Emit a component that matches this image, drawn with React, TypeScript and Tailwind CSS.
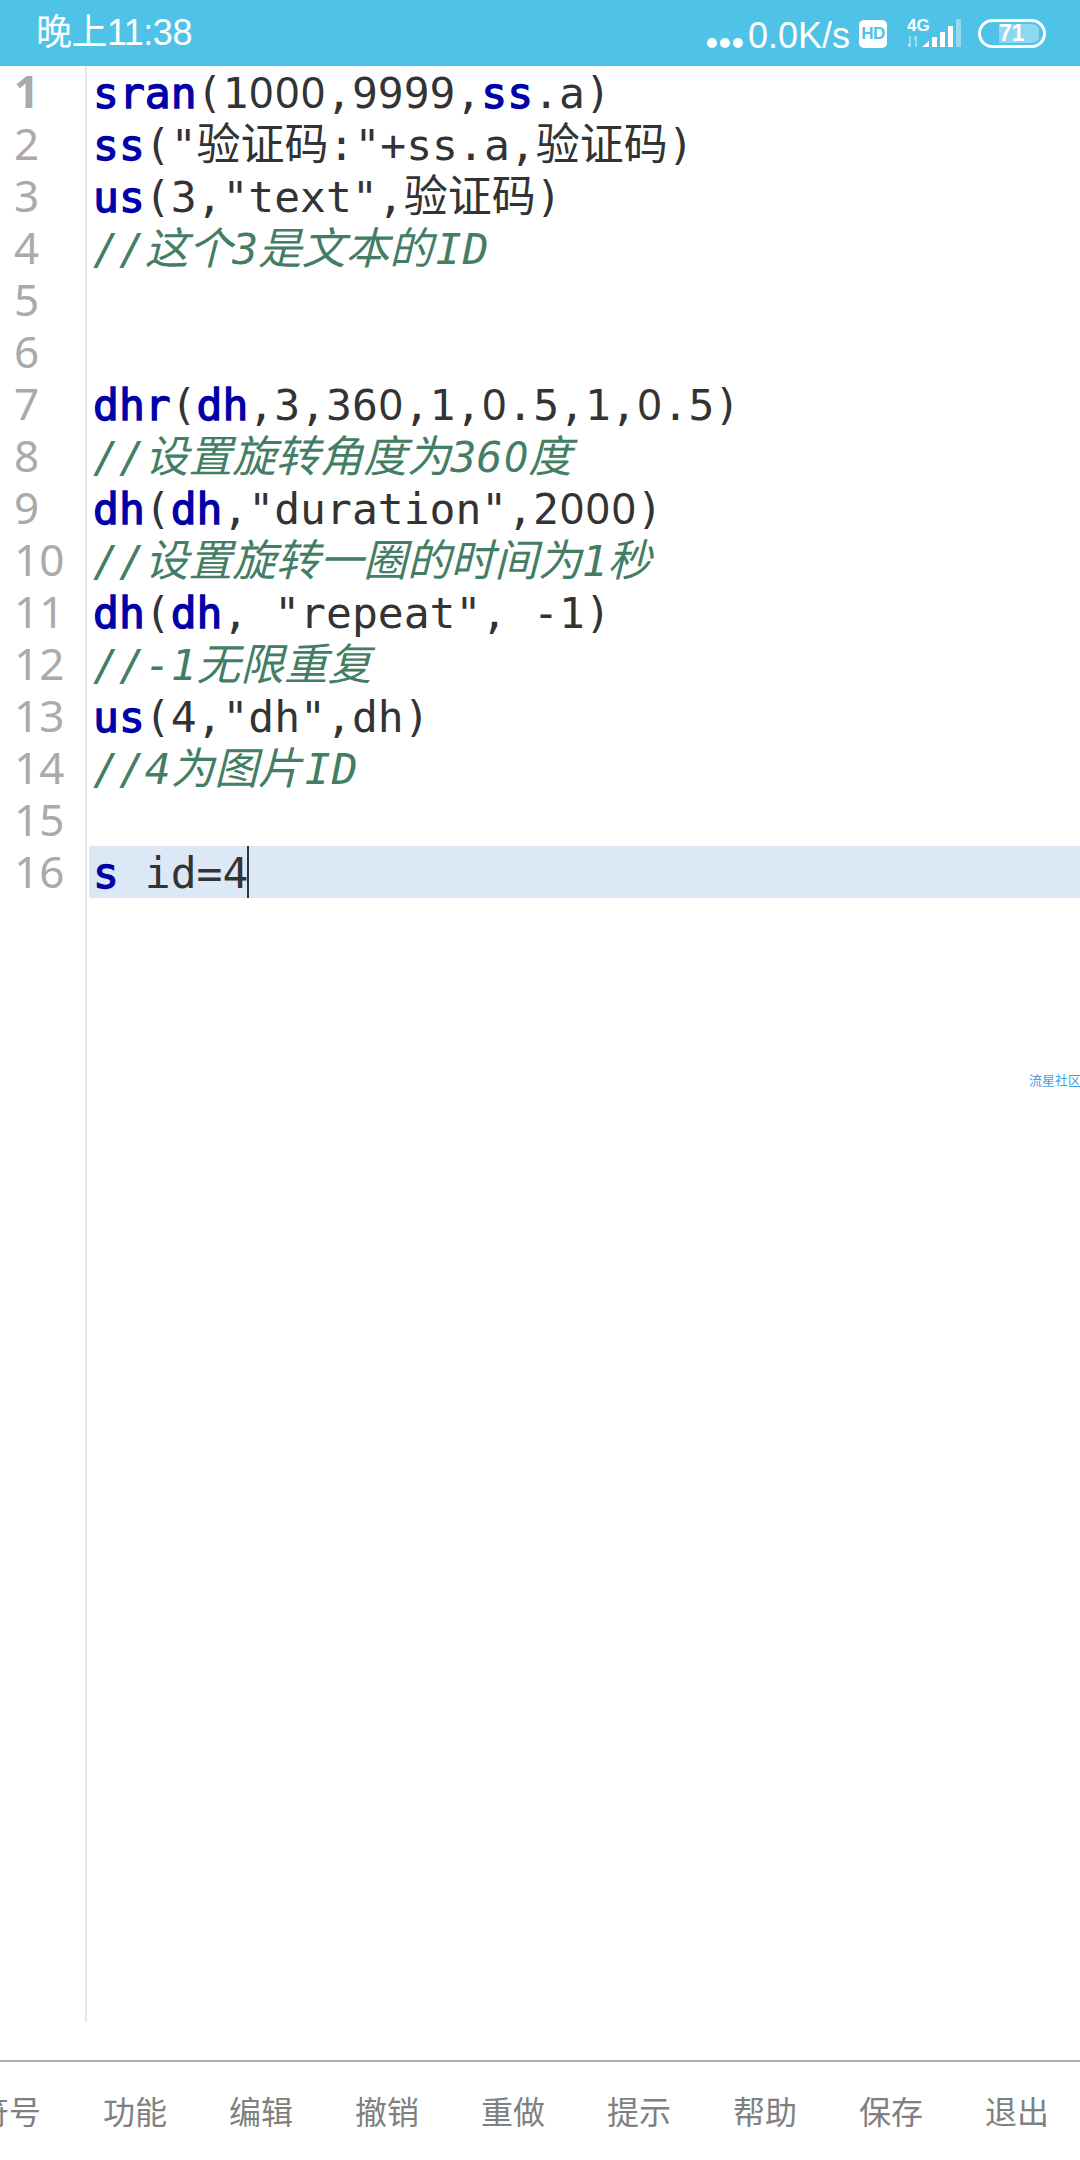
const MONO = "font-['DejaVu_Sans_Mono','Noto_Sans_CJK_SC',monospace]";

type Seg = { t: string; k?: "kw" | "cm" };
const lines: Seg[][] = [
  [{ t: "sran", k: "kw" }, { t: "(1000,9999," }, { t: "ss", k: "kw" }, { t: ".a)" }],
  [{ t: "ss", k: "kw" }, { t: '("验证码:"+ss.a,验证码)' }],
  [{ t: "us", k: "kw" }, { t: '(3,"text",验证码)' }],
  [{ t: "//这个3是文本的ID", k: "cm" }],
  [],
  [],
  [{ t: "dhr", k: "kw" }, { t: "(" }, { t: "dh", k: "kw" }, { t: ",3,360,1,0.5,1,0.5)" }],
  [{ t: "//设置旋转角度为360度", k: "cm" }],
  [{ t: "dh", k: "kw" }, { t: "(" }, { t: "dh", k: "kw" }, { t: ',"duration",2000)' }],
  [{ t: "//设置旋转一圈的时间为1秒", k: "cm" }],
  [{ t: "dh", k: "kw" }, { t: "(" }, { t: "dh", k: "kw" }, { t: ', "repeat", -1)' }],
  [{ t: "//-1无限重复", k: "cm" }],
  [{ t: "us", k: "kw" }, { t: '(4,"dh",dh)' }],
  [{ t: "//4为图片ID", k: "cm" }],
  [],
  [{ t: "s", k: "kw" }, { t: " id=4" }],
];

const menu = ["符号", "功能", "编辑", "撤销", "重做", "提示", "帮助", "保存", "退出"];

function Runs({ text, comment }: { text: string; comment?: boolean }) {
  const parts = text.split(/([\u4e00-\u9fff]+|0|ID)/).filter(Boolean);
  return (
    <>
      {parts.map((p, i) =>
        p === "0" ? (
          <span key={i} className="inline-block w-[25.9px] text-center font-['Noto_Sans',sans-serif] text-[43px] leading-[39.4px]">0</span>
        ) : p === "ID" ? (
          <span key={i} className="pl-[3px] tracking-[1px]">{p}</span>
        ) : /[\u4e00-\u9fff]/.test(p) ? (
          <span key={i} className={comment ? "text-[43.7px] leading-[42px]" : "text-[44px] leading-[42px]"}>{p}</span>
        ) : (
          <span key={i}>{p}</span>
        ),
      )}
    </>
  );
}

function Signal() {
  return (
    <svg width="56" height="30" viewBox="0 0 56 30" className="shrink-0">
      <text x="0" y="13" fontSize="17" fontWeight="700" fill="#fff" fontFamily="Liberation Sans">4G</text>
      <path d="M3 18v11M1 26l2 3M9 29V18M7 21l2-3" stroke="#fff" strokeOpacity="0.55" strokeWidth="1.5" fill="none" />
      <path d="M15 29l7-6v6z" fill="#fff" />
      <rect x="25" y="19" width="5" height="10" fill="#fff" />
      <rect x="33" y="14" width="5" height="15" fill="#fff" />
      <rect x="41" y="8" width="5" height="21" fill="#fff" />
      <rect x="49" y="1" width="5" height="28" fill="#fff" fillOpacity="0.4" />
    </svg>
  );
}

export default function App() {
  return (
    <div className="relative flex h-[2160px] w-[1080px] flex-col overflow-hidden bg-white">
      <div className="flex h-[66px] shrink-0 items-center justify-between bg-[#4fc3e7] pl-[36px] pr-[34px] text-white">
        <span className="font-['Liberation_Sans','Noto_Sans_CJK_SC',sans-serif] text-[36px] leading-none tracking-[-0.5px]">晚上11:38</span>
        <div className="mt-[3px] flex items-end">
          <div className="mb-[4px] mr-[5px] flex items-center gap-[3px]">
            <span className="size-[10px] rounded-full bg-white" />
            <span className="size-[10px] rounded-full bg-white" />
            <span className="size-[10px] rounded-full bg-white" />
          </div>
          <span className="font-['Liberation_Sans',sans-serif] text-[36px] leading-[32px]">0.0K/s</span>
          <span className="mb-[4px] ml-[9px] flex h-[28px] w-[28px] items-center justify-center rounded-[5px] bg-white font-['Liberation_Sans',sans-serif] text-[17px] font-bold leading-none tracking-[-0.5px] text-[#4fc3e7]">HD</span>
          <span className="mb-[4px] ml-[20px] flex"><Signal /></span>
          <div className="mb-[4px] ml-[15px] flex h-[29px] w-[68px] items-center rounded-full border-[3px] border-white p-[2px]">
            <div className="relative flex h-full w-full items-center overflow-hidden rounded-full">
              <div className="absolute inset-y-0 left-[16px] w-[40px] bg-white/35" />
              <span className="relative ml-[16px] font-['Liberation_Sans',sans-serif] text-[23px] font-bold leading-none">71</span>
            </div>
          </div>
        </div>
      </div>

      <div className="flex h-[1956px] shrink-0">
        <div className="w-[87px] shrink-0 border-r-2 border-[#e8e8e8] font-['Noto_Sans',sans-serif] text-[44px] text-[#aaaaaa]">
          {lines.map((_, i) => (
            <div key={i} className={`flex h-[52px] items-center pb-[3px] pl-[14px] leading-none ${i === 0 ? "font-bold" : ""}`}>{i + 1}</div>
          ))}
        </div>
        <div className={`min-w-0 flex-1 pl-[2px] ${MONO} text-[43px] text-[#333333]`}>
          {lines.map((segs, i) => (
            <div key={i} className={`flex h-[52px] items-center whitespace-pre pl-[4px] pt-[3px] leading-none ${i === 15 ? "bg-[#dde8f6]" : ""}`}>
              {segs.map((s, j) => (
                <span
                  key={j}
                  className={
                    s.k === "kw"
                      ? "text-[#0000a8] [-webkit-text-stroke:1.3px_#0000a8]"
                      : s.k === "cm"
                        ? "italic text-[#437d64]"
                        : ""
                  }
                >
                  <Runs text={s.t} comment={s.k === "cm"} />
                </span>
              ))}
              {i === 15 && <span className="-mt-[3px] ml-[-1px] h-[52px] w-[2px] self-start bg-[#333333]" />}
            </div>
          ))}
        </div>
      </div>

      <div className="mt-[38px] flex h-[100px] shrink-0 items-center justify-end border-t-2 border-[#a3b0b6] pb-[2px] font-['Noto_Sans_CJK_SC',sans-serif] text-[32px] text-[#808080]">
        {menu.map((m) => (
          <div key={m} className="w-[126px] shrink-0 text-center">{m}</div>
        ))}
      </div>

      <span className="absolute left-[1029px] top-[1073px] whitespace-nowrap font-['Noto_Sans_CJK_SC',sans-serif] text-[13px] leading-none text-[#3f9fdc]">流星社区</span>
    </div>
  );
}
